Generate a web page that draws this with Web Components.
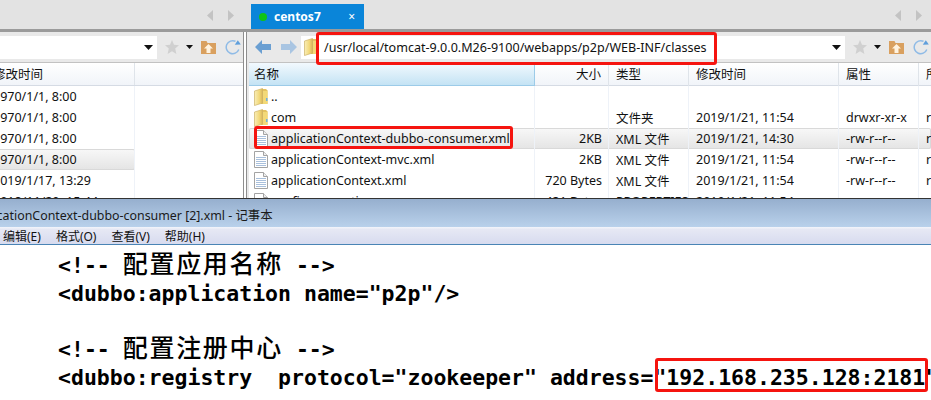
<!doctype html>
<html><head><meta charset="utf-8">
<style>
html,body{margin:0;padding:0;background:#fff;overflow:hidden}
body{width:931px;height:400px;position:relative;font-family:"Noto Sans","Noto Sans CJK SC",sans-serif}
</style></head>
<body>
<shot-app></shot-app>
<script>
const FONT='"Noto Sans","Noto Sans CJK SC",sans-serif';
const I={
folder:`<svg width="14" height="18" viewBox="0 0 14 18"><defs><linearGradient id="f" x1="0" x2="1"><stop offset="0" stop-color="#f9eeb8"/><stop offset=".6" stop-color="#f2d879"/><stop offset="1" stop-color="#d8b558"/></linearGradient></defs><path d="M7 1h5l1.500 1.500V16H7z" fill="#e4c25f"/><path d="M.5 3 8.500 .5V15L.5 17.500z" fill="url(#f)" stroke="#cdb165" stroke-width=".7"/><path d="M9 3h4.500v13H9z" fill="#f3d977"/><path d="M12 10h1.500v3H12z" fill="#6fb0dc"/></svg>`,
doc:`<svg width="14" height="17" viewBox="0 0 14 17"><path d="M.5.5h9l4 4v12H.5z" fill="#fff" stroke="#a3a3a3"/><path d="M9.500 .5v4h4" fill="#eee" stroke="#a3a3a3"/><path d="M2 6.500h10M2 8.500h10M2 10.500h10M2 12.500h10M2 14.500h10" stroke="#a9c0dc"/></svg>`,
back:`<svg width="16" height="14" viewBox="0 0 16 14"><path d="M0 7 7 0v4h9v6H7v4z" fill="#6a9fd2"/></svg>`,
fwd:`<svg width="16" height="14" viewBox="0 0 16 14"><path d="M16 7 9 0v4H0v6h9v4z" fill="#a9c5e2"/></svg>`,
star:`<svg width="14" height="14" viewBox="0 0 14 14"><path d="m7 0 2 4.800 5 .4-3.800 3.300L11.400 14 7 11.200 2.600 14l1.200-5.500L0 5.200l5-.4z" fill="#d0d0d0"/></svg>`,
home:`<svg width="15" height="13" viewBox="0 0 15 13"><path d="M0 0h5.500l1 2H15v11H0z" fill="#d9a05f"/><path d="m7.500 3 4.500 4.500h-2.500V12h-4V7.500H3z" fill="#fff3e0"/></svg>`,
refresh:`<svg width="16" height="16" viewBox="0 0 16 16"><path d="M13.800 10.500A6.500 6.500 0 1 1 10.500 2.300" fill="none" stroke="#8fbbe6" stroke-width="1.500"/><path d="m15.800 5.500-6 .2 3-4.500z" fill="#5f9fdc"/></svg>`,
caret:`<svg width="9" height="5" viewBox="0 0 9 5"><path d="M0 0h9L4.500 5z" fill="#111"/></svg>`,
tl:`<svg width="7" height="11" viewBox="0 0 7 11"><path d="M6 0v11L0 5.500z" fill="#c3c3c3"/></svg>`,
tr:`<svg width="7" height="11" viewBox="0 0 7 11"><path d="M1 0v11l6-5.500z" fill="#c3c3c3"/></svg>`
};
class El extends HTMLElement{
  render(css,html){ if(!this.shadowRoot)this.attachShadow({mode:'open'}); this.shadowRoot.innerHTML=`<style>${css}</style>${html}`; }
}
class TabBar extends El{connectedCallback(){this.render(`
 :host{display:grid;grid-template-columns:243px 8px 113px 1fr;height:32px;background:#e3e3e3;box-sizing:border-box;border-bottom:3px solid #9b9b9b}
 .nav{display:flex;justify-content:flex-end;align-items:center;gap:13px;padding:2px 9px 0 0}
 .a{grid-column:1}.b{grid-column:4}
 .tab{grid-column:3;margin-top:4px;background:#0a85d9;color:#fff;font:700 12px ${FONT};display:flex;align-items:center;padding-left:8px;box-sizing:border-box}
 .dot{width:8px;height:8px;border-radius:50%;background:#0fc416;margin-right:7px}
 .x{margin-left:auto;margin-right:9px;font-size:12px;font-weight:400;line-height:1}
`,`<div class="nav a">${I.tl}${I.tr}</div><div class="tab"><i class="dot"></i>centos7<span class="x">×</span></div><div class="nav b">${I.tl}${I.tr}</div>`)}}
class FileRow extends El{connectedCallback(){
 const c=(this.getAttribute('cells')||'').split('|');
 const ic=this.getAttribute('icon');
 const inner=c.map((t,i)=>`<div class="c ${i==0&&ic?'n':''} ${this.getAttribute('right')==i?'r':''}">${i==0&&ic?`<span class="i">${I[ic]}</span>`:''}<span>${t}</span></div>`).join('');
 this.render(`
 :host{display:grid;grid-template-columns:var(--cols);height:21px;font-size:12.500px;color:#111;white-space:nowrap;box-sizing:border-box;align-items:center}
 :host([sel]){background:linear-gradient(#f8f8f8,#e4e4e4);box-shadow:inset 0 0 0 1px #d9d9d9;border-radius:2px;margin-right:var(--selr,0)}
 .c{padding-left:7px;box-sizing:border-box;overflow:hidden;display:flex;align-items:center;height:21px;border-right:1px solid #eef2f8}
 .c:last-child{border-right:0}
 .r{justify-content:flex-end;padding:0 6px 0 0}
 .n{padding-left:5px;gap:3px}.i{display:flex;width:14px;justify-content:center}
`,inner)}}
class FilePane extends El{connectedCallback(){
 const nav=this.hasAttribute('nav');
 const heads=this.getAttribute('heads').split('|');
 this.render(`
 :host{display:flex;flex-direction:column;height:166px;background:#e9e9e9;overflow:hidden;min-width:0}
 .bar{height:30px;display:flex;align-items:center;flex:none;box-sizing:border-box;position:relative}
 .nv{display:flex;gap:10px;width:52px;padding-left:6px;box-sizing:border-box}
 .combo{flex:1;height:23px;background:#fff;display:flex;align-items:center;font-size:12.550px;color:#111;min-width:0}
 .combo .fi{display:flex;margin:0 0 0 3px;width:20px}
 .combo .path{flex:1;white-space:nowrap}
 .combo .ca{display:flex;margin:0 4px 0 0}
 .tools{display:flex;align-items:center;flex:none;width:86px;padding-left:8px;box-sizing:border-box}
 .tools span{display:flex}
 .tools .s2{margin:0 0 0 7px}.tools .s3{margin-left:8px}.tools .s4{margin-left:9px}
 .tb{flex:1;background:#fff;border-top:1px solid #c2c2c2;min-height:0;overflow:hidden;margin-left:var(--ml,0);--cols:var(--columns)}
 .h{display:grid;grid-template-columns:var(--columns);height:23px;font-size:12.500px;color:#111;background:linear-gradient(#fff,#f1f4f9);border-bottom:1px solid #d5dbe4;box-sizing:border-box}
 .h div{padding:0 0 2px 7px;display:flex;align-items:center;border-right:1px solid #dfe4ea;white-space:nowrap;overflow:hidden;box-sizing:border-box}
 .h div:last-child{border-right:0}
 .h .on{background:linear-gradient(#f2f9fe,#c4e3f4);border-right:1px solid #9ccbe8;border-bottom:1px solid #9ccbe8;height:23px;padding-left:5px}
 .h .rt{justify-content:flex-end;padding:0 7px 2px 0}
`,`<div class="bar">${nav?`<div class="nv">${I.back}${I.fwd}</div>`:''}<div class="combo">${nav?`<span class="fi">${I.folder}</span>`:''}<span class="path">${this.getAttribute('path')||''}</span><span class="ca">${I.caret}</span></div><div class="tools"><span>${I.star}</span><span class="s2">${I.caret.replace('width="9"','width="7"').replace('height="5"','height="4"')}</span><span class="s3">${I.home}</span><span class="s4">${I.refresh}</span></div></div>
 <div class="tb"><div class="h">${heads.map((h,i)=>`<div class="${nav&&i==0?'on':''} ${nav&&i==1?'rt':''}">${h}</div>`).join('')}</div><slot></slot></div>`)}}
class NotePad extends El{connectedCallback(){this.render(`
 :host{display:block;height:202px;overflow:hidden;border-top:1px solid #333;box-sizing:border-box;background:#fff}
 .title{height:28px;padding-top:5px;box-sizing:border-box;background:linear-gradient(#96afce,#b9d1eb);font-size:12.400px;line-height:14px;color:#1a1a1a;display:flex;align-items:center;white-space:nowrap;overflow:hidden}
 .title span{margin-left:-32px}
 .menu{height:18px;padding-top:3px;box-sizing:border-box;background:linear-gradient(#f3f5fb 0,#e6e8f4 15%,#d7dbef);display:flex;align-items:center;font-size:12px;line-height:14px;color:#111;padding-left:3px;gap:15px;border-bottom:1px solid #4a84b5;white-space:nowrap}
 .ed{padding:7px 0 0 58px;font:700 21.500px/28px "DejaVu Sans Mono",monospace;color:#000}
`,`<div class="title"><span>applicationContext-dubbo-consumer [2].xml - 记事本</span></div><div class="menu"><span>编辑(E)</span><span>格式(O)</span><span>查看(V)</span><span>帮助(H)</span></div><div class="ed"><slot></slot></div>`)}}
class CodeLine extends El{connectedCallback(){this.render(`:host{display:block;height:28px;white-space:pre}`,`<slot></slot>`)}}
class ZhText extends El{connectedCallback(){this.render(`:host{display:inline;font:500 25px/0 "Noto Sans CJK SC",sans-serif;letter-spacing:1.700px}`,`<slot></slot>`)}}
class RedMark extends El{connectedCallback(){
 const [x,y,w,h]=this.getAttribute('box').split(',');
 this.render(`:host{position:absolute;left:${x}px;top:${y}px;width:${w}px;height:${h}px;box-sizing:border-box;border:3px solid #f5140f;border-radius:3px;pointer-events:none}`,``)}}
class ShotApp extends El{connectedCallback(){this.render(`
 :host{display:block;width:931px;height:400px;position:relative;overflow:hidden;font-family:${FONT}}
 .l{--columns:149px 1fr;--ml:-14px}
 .lp{border-right:1px solid #8e8e8e;box-sizing:border-box}
 .wrap{display:grid;grid-template-columns:244px 1fr;height:166px}
 .wr{border-left:1px solid #8e8e8e;margin-left:2px;background:#e9e9e9;padding-left:2px;min-width:0}
`,`<tab-bar></tab-bar>
<div class="wrap">
 <file-pane class="l lp" heads="修改时间|">
  <file-row cells="1970/1/1, 8:00|"></file-row>
  <file-row cells="1970/1/1, 8:00|"></file-row>
  <file-row cells="1970/1/1, 8:00|"></file-row>
  <file-row sel cells="1970/1/1, 8:00|" style="--selr:108px;grid-template-columns:149px"></file-row>
  <file-row cells="2019/1/17, 13:29|"></file-row>
  <file-row cells="2018/11/20, 15:44|"></file-row>
 </file-pane>
 <div class="wr">
 <file-pane class="rp" style="--columns:286px 74px 80px 150px 80px 1fr" nav path="/usr/local/tomcat-9.0.0.M26-9100/webapps/p2p/WEB-INF/classes" heads="名称|大小|类型|修改时间|属性|所有者">
  <file-row right="1" icon="folder" cells="..|||||"></file-row>
  <file-row right="1" icon="folder" cells="com||文件夹|2019/1/21, 11:54|drwxr-xr-x|root"></file-row>
  <file-row sel right="1" icon="doc" cells="applicationContext-dubbo-consumer.xml|2KB|XML 文件|2019/1/21, 14:30|-rw-r--r--|root"></file-row>
  <file-row right="1" icon="doc" cells="applicationContext-mvc.xml|2KB|XML 文件|2019/1/21, 11:54|-rw-r--r--|root"></file-row>
  <file-row right="1" icon="doc" cells="applicationContext.xml|720 Bytes|XML 文件|2019/1/21, 11:54|-rw-r--r--|root"></file-row>
  <file-row right="1" icon="doc" cells="config.properties|431 Bytes|PROPERTIES|2019/1/21, 11:54|-rw-r--r--|root"></file-row>
 </file-pane>
 </div>
</div>
<note-pad><code-line>&lt;!-- <zh-text>配置应用名称</zh-text> --&gt;</code-line><code-line>&lt;dubbo:application name="p2p"/&gt;</code-line><code-line></code-line><code-line>&lt;!-- <zh-text>配置注册中心</zh-text> --&gt;</code-line><code-line>&lt;dubbo:registry  protocol="zookeeper" address="192.168.235.128:2181"</code-line></note-pad>
<red-mark box="316,32,401,33"></red-mark>
<red-mark box="254,126,259,23"></red-mark>
<red-mark box="655,358,273,34"></red-mark>`)}}
customElements.define('file-row',FileRow);
customElements.define('file-pane',FilePane);
customElements.define('tab-bar',TabBar);
customElements.define('code-line',CodeLine);
customElements.define('zh-text',ZhText);
customElements.define('note-pad',NotePad);
customElements.define('red-mark',RedMark);
customElements.define('shot-app',ShotApp);
</script>
</body></html>
